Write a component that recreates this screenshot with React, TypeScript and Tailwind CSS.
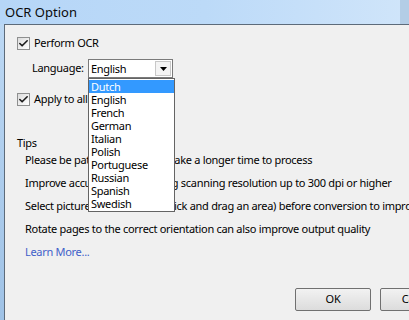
import { Check } from 'lucide-react';

const font = { fontFamily: '"Noto Sans", "Open Sans", sans-serif' };

const languages = ['Dutch', 'English', 'French', 'German', 'Italian', 'Polish', 'Portuguese', 'Russian', 'Spanish', 'Swedish'];

const tips = [
  'Please be patient, OCR would take a longer time to process',
  'Improve accuracy by increasing scanning resolution up to 300 dpi or higher',
  'Select picture/table area (left click and drag an area) before conversion to improve accuracy',
  'Rotate pages to the correct orientation can also improve output quality',
];

function CheckBox() {
  return (
    <span className="flex h-[13px] w-[13px] shrink-0 items-center justify-center border border-[#8e8f8f] bg-gradient-to-br from-[#dcdcdc] to-white">
      <Check size={11} strokeWidth={3.5} className="text-[#1b1b1b]" />
    </span>
  );
}

export default function App() {
  return (
    <div className="relative flex h-[320px] w-[409px] flex-col overflow-hidden bg-[#f0f0f0] text-[11px] tracking-[-0.3px] text-black" style={font}>
      {/* Title bar */}
      <div className="flex h-[24px] shrink-0 items-center bg-gradient-to-r from-[#b6d6f7] via-[#bcdaf8] to-[#d0e5fa] pl-[5px]">
        <span className="text-[13px] leading-none tracking-normal text-[#0a0a0a]">OCR Option</span>
        <div className="ml-auto h-full w-[9px] bg-[#b3cde6]" />
      </div>

      <div className="flex min-h-0 flex-1">
        <div className="w-[4px] shrink-0 bg-gradient-to-b from-[#bcd8f4] to-[#9fc2e6]" />
        <div className="flex min-w-0 flex-1 flex-col border-l border-t border-[#5d6b7a] bg-[#f0f0f0] pl-[12px]">
          <label className="mt-[10px] flex h-[16px] items-center gap-[4px]">
            <CheckBox />
            <span>Perform OCR</span>
          </label>

          <div className="mt-[8px] flex h-[19px] items-center pl-[15px]">
            <span className="w-[56px] shrink-0">Language:</span>
            <div className="flex h-[19px] w-[85px] shrink-0 items-center border border-[#7a7a7a] bg-white pl-[2px]">
              <span className="flex-1 leading-none">English</span>
              <span className="mr-[1px] flex h-[15px] w-[16px] items-center justify-center border border-[#c8c8c8] bg-[#f4f4f4]">
                <svg width="7" height="4" viewBox="0 0 7 4">
                  <path d="M0 0h7L3.5 4z" fill="#000" />
                </svg>
              </span>
            </div>
          </div>

          <label className="mt-[13px] flex h-[16px] items-center gap-[4px]">
            <CheckBox />
            <span>Apply to all pages</span>
          </label>

          <div className="mt-[28px] h-[16px] leading-[16px]">Tips</div>
          <div className="mt-[1px] flex flex-col gap-[7px] pl-[8px] whitespace-nowrap">
            {tips.map((t) => (
              <div key={t} className="h-[16px] leading-[16px]">{t}</div>
            ))}
            <div className="h-[16px] leading-[16px] text-[#3f5fc9]">Learn More...</div>
          </div>

          <div className="mt-auto mb-[9px] flex gap-[9px] pl-[278px]">
            <button className="h-[23px] w-[76px] shrink-0 rounded-[2px] border border-[#707070] bg-gradient-to-b from-[#f2f2f2] to-[#dcdcdc]">OK</button>
            <button className="h-[23px] w-[76px] shrink-0 rounded-[2px] border border-[#707070] bg-gradient-to-b from-[#f2f2f2] to-[#dcdcdc]">Cancel</button>
          </div>
        </div>
      </div>

      {/* Open dropdown list */}
      <div className="absolute left-[88px] top-[78px] w-[87px] border border-[#646464] bg-white py-[1px]">
        {languages.map((l, i) => (
          <div
            key={l}
            className={`h-[13px] pl-[2px] leading-[13px] ${i === 0 ? 'bg-[#3399ff] text-white' : ''}`}
          >
            {l}
          </div>
        ))}
      </div>
    </div>
  );
}
